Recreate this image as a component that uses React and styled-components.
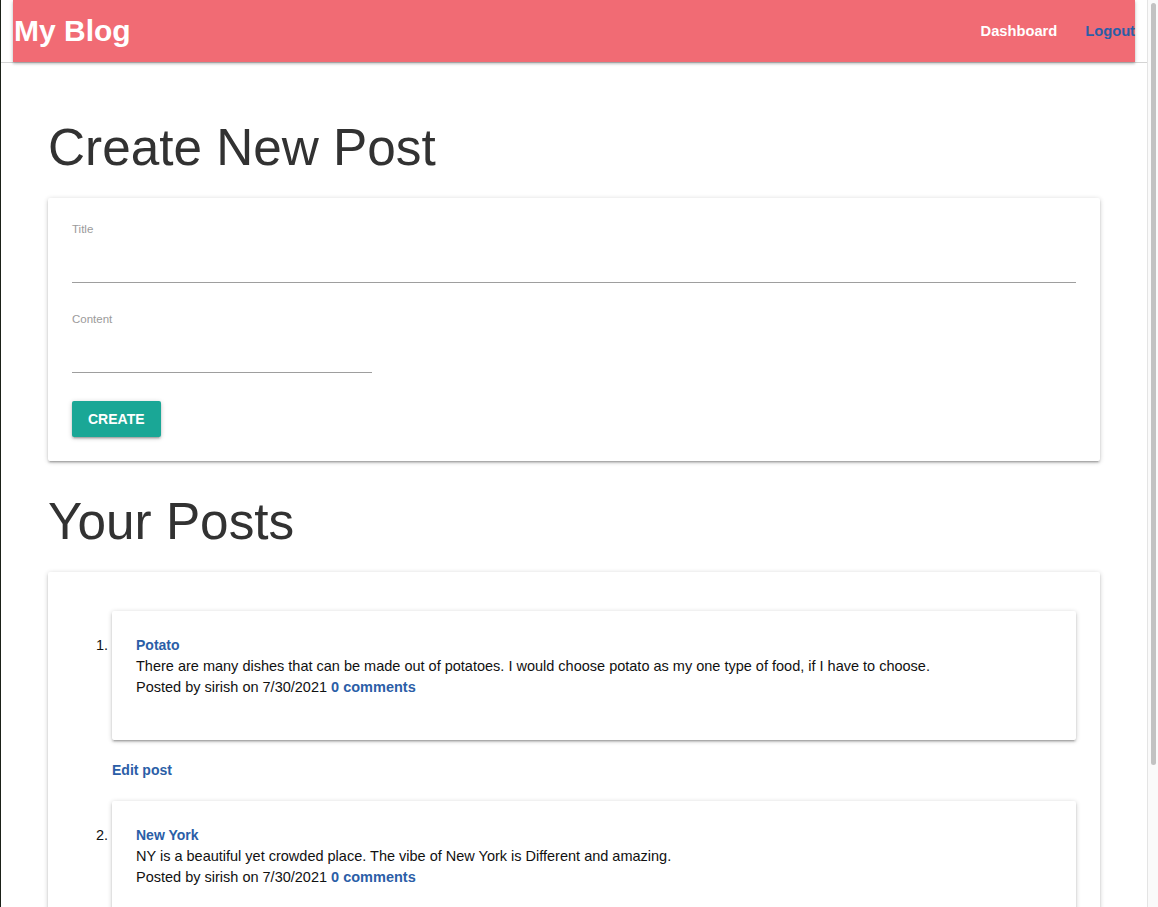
import React from 'react';
import styled, { createGlobalStyle } from 'styled-components';

const GlobalStyle = createGlobalStyle`
  html, body {
    margin: 0;
    padding: 0;
    overflow: hidden;
    background: #fff;
  }
  body {
    font-family: "Liberation Sans", Arial, Helvetica, sans-serif;
    color: #111;
  }
`;

const Page = styled.div`
  display: flex;
  height: 100vh;
  overflow: hidden;
`;

const Main = styled.div`
  flex: 1;
  min-width: 0;
  border-left: 1px solid #1b2118;
  overflow: hidden;
  background: #fff;
`;

const ScrollTrack = styled.div`
  width: 11px;
  flex-shrink: 0;
  border-left: 1px solid #e4e4e4;
  background: #fafafa;
  padding: 3px 2px 0 3px;
  box-sizing: border-box;
`;

const ScrollThumb = styled.div`
  height: 762px;
  border-radius: 4px;
  background: #c2c2c2;
`;

const Header = styled.header`
  display: flex;
  padding: 0 12px 0 12px;
  border-bottom: 1px solid #d4d4d4;
`;

const Nav = styled.nav`
  flex: 1;
  height: 62px;
  display: flex;
  align-items: center;
  justify-content: space-between;
  background: #f16b74;
  box-shadow: 0 2px 2px 0 rgba(0, 0, 0, 0.14), 0 1px 4px 0 rgba(0, 0, 0, 0.18);
`;

const Brand = styled.a`
  font-size: 30px;
  font-weight: 700;
  line-height: 62px;
  padding-left: 1px;
  color: #fff;
  text-decoration: none;
`;

const NavLinks = styled.ul`
  display: flex;
  gap: 28px;
  list-style: none;
  margin: 0;
  padding: 0;
`;

const NavLink = styled.a`
  font-size: 14.7px;
  font-weight: 700;
  color: ${(p) => (p.$accent ? '#2b5ea7' : '#fff')};
  text-decoration: none;
`;

const Container = styled.div`
  width: 1052px;
  margin: 0 auto;
  padding-top: 24px;
`;

const Heading = styled.h3`
  font-size: 51.3px;
  font-weight: 400;
  line-height: 56px;
  color: #323232;
  margin: 33px 0 22px;
`;

const Card = styled.div`
  background: #fff;
  border-radius: 2px;
  padding: ${(p) => p.$pad || '24px'};
  box-shadow: 0 2px 2px 0 rgba(0, 0, 0, 0.14), 0 3px 1px -2px rgba(0, 0, 0, 0.12),
    0 1px 5px 0 rgba(0, 0, 0, 0.2);
`;

const Field = styled.div`
  width: ${(p) => p.$width || '100%'};
  margin-bottom: ${(p) => p.$gap || '29px'};
`;

const Label = styled.label`
  display: block;
  font-size: 11.5px;
  line-height: 14px;
  color: #9b9b9b;
`;

const Input = styled.input`
  display: block;
  width: 100%;
  height: 47px;
  box-sizing: border-box;
  border: none;
  border-bottom: 1px solid #9e9e9e;
  outline: none;
  background: transparent;
  font-family: inherit;
  font-size: 16px;
  padding: 0;
`;

const Button = styled.button`
  height: 36px;
  padding: 0 16px;
  border: none;
  border-radius: 2px;
  background: #1aa796;
  color: #fff;
  font-family: "Liberation Sans", Arial, sans-serif;
  font-size: 14px;
  font-weight: 700;
  letter-spacing: 0;
  text-transform: uppercase;
  box-shadow: 0 2px 2px 0 rgba(0, 0, 0, 0.14), 0 3px 1px -2px rgba(0, 0, 0, 0.12),
    0 1px 5px 0 rgba(0, 0, 0, 0.2);
`;

const PostList = styled.ol`
  margin: 15px 0 0;
  padding-left: 40px;
  font-size: 14.5px;
  line-height: 21px;
  color: #111;
`;

const PostItem = styled.li`
  margin-bottom: 20px;
`;

const PostTitle = styled.a`
  display: block;
  font-size: 14px;
  font-weight: 700;
  color: #2b5ea7;
  text-decoration: none;
`;

const PostBody = styled.p`
  margin: 0;
`;

const Meta = styled.div``;

const BlueLink = styled.a`
  font-weight: 700;
  color: #2b5ea7;
  text-decoration: none;
`;

const EditLink = styled(BlueLink)`
  display: block;
  margin-top: 20px;
  font-size: 14px;
`;

const posts = [
  {
    title: 'Potato',
    body: 'There are many dishes that can be made out of potatoes. I would choose potato as my one type of food, if I have to choose.',
    author: 'sirish',
    date: '7/30/2021',
    comments: 0,
  },
  {
    title: 'New York',
    body: 'NY is a beautiful yet crowded place. The vibe of New York is Different and amazing.',
    author: 'sirish',
    date: '7/30/2021',
    comments: 0,
  },
];

export default function App() {
  return (
    <Page>
      <GlobalStyle />
      <Main>
        <Header>
          <Nav>
            <Brand href="#">My Blog</Brand>
            <NavLinks>
              <li><NavLink href="#">Dashboard</NavLink></li>
              <li><NavLink href="#" $accent>Logout</NavLink></li>
            </NavLinks>
          </Nav>
        </Header>

        <Container>
          <Heading>Create New Post</Heading>
          <Card>
            <Field>
              <Label>Title</Label>
              <Input type="text" />
            </Field>
            <Field $width="300px" $gap="28px">
              <Label>Content</Label>
              <Input type="text" />
            </Field>
            <Button>Create</Button>
          </Card>

          <Heading>Your Posts</Heading>
          <Card>
            <PostList>
              {posts.map((post) => (
                <PostItem key={post.title}>
                  <Card $pad="24px 24px 42px">
                    <PostTitle href="#">{post.title}</PostTitle>
                    <PostBody>{post.body}</PostBody>
                    <Meta>
                      Posted by {post.author} on {post.date}{' '}
                      <BlueLink href="#">{post.comments} comments</BlueLink>
                    </Meta>
                  </Card>
                  <EditLink href="#">Edit post</EditLink>
                </PostItem>
              ))}
            </PostList>
          </Card>
        </Container>
      </Main>
      <ScrollTrack>
        <ScrollThumb />
      </ScrollTrack>
    </Page>
  );
}
